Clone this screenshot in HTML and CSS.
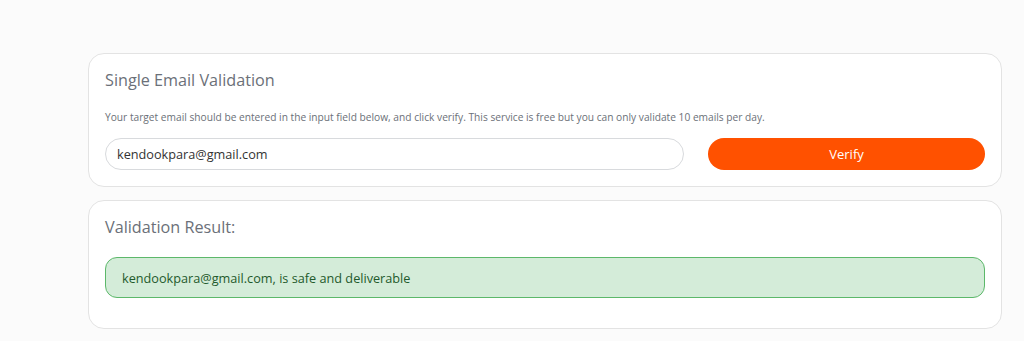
FILE: index.html
```html
<!DOCTYPE html>
<html>
<head>
<meta charset="utf-8">
<link rel="stylesheet" href="styles.css">
</head>
<body>
<main class="page">
  <section class="card">
    <h2 class="card-title">Single Email Validation</h2>
    <p class="card-desc">Your target email should be entered in the input field below, and click verify. This service is free but you can only validate 10 emails per day.</p>
    <form class="verify-row">
      <input class="email-input" type="text" value="kendookpara@gmail.com">
      <button class="verify-btn" type="button">Verify</button>
    </form>
  </section>
  <section class="card result-card">
    <h2 class="card-title">Validation Result:</h2>
    <div class="alert-success">kendookpara@gmail.com, is safe and deliverable</div>
  </section>
</main>
</body>
</html>
```
FILE: styles.css
```css
html, body {
  margin: 0;
  padding: 0;
  background: #fbfbfb;
}
body {
  font-family: "Open Sans", "Liberation Sans", sans-serif;
}
.page {
  width: 914px;
  margin-left: 88px;
  padding-top: 53px;
  display: flex;
  flex-direction: column;
  gap: 13px;
}
.card {
  box-sizing: border-box;
  background: #fff;
  border: 1px solid #e3e3e3;
  border-radius: 16px;
  padding: 14px 16px 16px 16px;
  height: 134px;
}
.result-card {
  height: 129px;
}
.card-title {
  margin: 0;
  font-weight: 400;
  font-size: 16.2px;
  line-height: 24px;
  color: #6b7078;
}
.card-desc {
  margin: 17px 0 0;
  font-size: 10.2px;
  line-height: 16px;
  color: #6b7078;
}
.verify-row {
  margin: 13px 0 0;
  display: flex;
  gap: 24px;
}
.email-input {
  box-sizing: border-box;
  flex: 0 0 579px;
  height: 32px;
  border: 1px solid #d8dadd;
  border-radius: 16px;
  padding: 0 11px;
  font-family: inherit;
  font-size: 12.7px;
  color: #333;
  background: #fff;
  outline: none;
}
.verify-btn {
  flex: 1;
  height: 32px;
  border: none;
  border-radius: 16px;
  background: #ff5100;
  color: #fff;
  font-family: inherit;
  font-size: 13px;
}
.alert-success {
  margin-top: 18px;
  box-sizing: border-box;
  height: 41px;
  display: flex;
  align-items: center;
  padding: 0 16px;
  background: #d4ecd9;
  border: 1px solid #5cb86a;
  border-radius: 12px;
  color: #1f5a2c;
  font-size: 12.7px;
}
```
